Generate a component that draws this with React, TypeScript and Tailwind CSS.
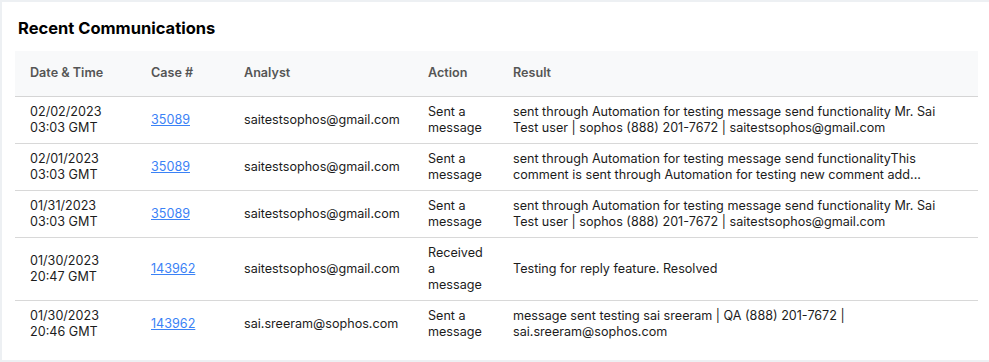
import React from "react";

interface Communication {
  date: string;
  time: string;
  caseId: string;
  analyst: string;
  action: string;
  result: string;
}

const rows: Communication[] = [
  {
    date: "02/02/2023",
    time: "03:03 GMT",
    caseId: "35089",
    analyst: "saitestsophos@gmail.com",
    action: "Sent a message",
    result:
      "sent through Automation for testing message send functionality Mr. Sai Test user | sophos (888) 201-7672 | saitestsophos@gmail.com",
  },
  {
    date: "02/01/2023",
    time: "03:03 GMT",
    caseId: "35089",
    analyst: "saitestsophos@gmail.com",
    action: "Sent a message",
    result:
      "sent through Automation for testing message send functionalityThis comment is sent through Automation for testing new comment add...",
  },
  {
    date: "01/31/2023",
    time: "03:03 GMT",
    caseId: "35089",
    analyst: "saitestsophos@gmail.com",
    action: "Sent a message",
    result:
      "sent through Automation for testing message send functionality Mr. Sai Test user | sophos (888) 201-7672 | saitestsophos@gmail.com",
  },
  {
    date: "01/30/2023",
    time: "20:47 GMT",
    caseId: "143962",
    analyst: "saitestsophos@gmail.com",
    action: "Received a message",
    result: "Testing for reply feature. Resolved",
  },
  {
    date: "01/30/2023",
    time: "20:46 GMT",
    caseId: "143962",
    analyst: "sai.sreeram@sophos.com",
    action: "Sent a message",
    result: "message sent testing sai sreeram | QA (888) 201-7672 | sai.sreeram@sophos.com",
  },
];

const App: React.FC = () => {
  return (
    <div
      className="w-[1000px] h-[362px] bg-white border-2 border-[#edf0f3] pt-[14px] pl-[13px] pr-[9px] text-[#1c1c1c]"
      style={{ fontFamily: "Inter, 'Liberation Sans', sans-serif" }}
    >
      <h2 className="text-[16.5px] leading-6 font-bold text-black px-[3px] mb-[11px]">
        Recent Communications
      </h2>
      <table className="w-[963px] table-fixed border-collapse text-[12.6px] leading-4">
        <colgroup>
          <col className="w-[121px]" />
          <col className="w-[93px]" />
          <col className="w-[184px]" />
          <col className="w-[85px]" />
          <col />
        </colgroup>
        <thead>
          <tr className="bg-[#f8f9fa] border-b border-[#d5d5d5] text-left text-[#555] font-semibold">
            <th className="px-[15px] h-[45px] font-semibold">Date &amp; Time</th>
            <th className="px-[15px] font-semibold">Case #</th>
            <th className="px-[15px] font-semibold">Analyst</th>
            <th className="px-[15px] font-semibold">Action</th>
            <th className="px-[15px] font-semibold">Result</th>
          </tr>
        </thead>
        <tbody>
          {rows.map((row, i) => (
            <tr
              key={i}
              className={i < rows.length - 1 ? "border-b border-[#d8d8d8]" : ""}
            >
              <td className="px-[15px] py-[7px] align-middle">
                <div>{row.date}</div>
                <div>{row.time}</div>
              </td>
              <td className="px-[15px] py-[7px]">
                <a href="#" className="text-[#3b82f6] underline">
                  {row.caseId}
                </a>
              </td>
              <td className="px-[15px] py-[7px]">{row.analyst}</td>
              <td className="px-[15px] py-[7px]">{row.action}</td>
              <td className="px-[15px] py-[7px]">{row.result}</td>
            </tr>
          ))}
        </tbody>
      </table>
    </div>
  );
};

export default App;
